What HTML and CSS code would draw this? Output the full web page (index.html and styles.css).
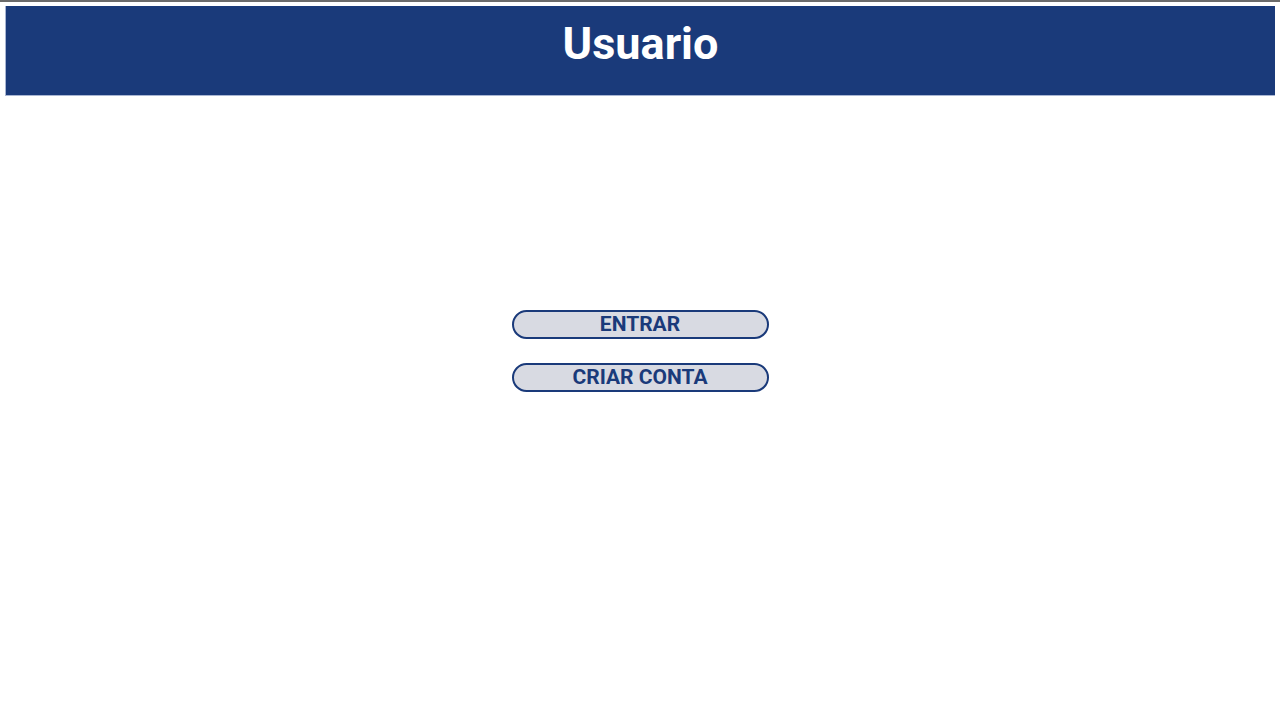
FILE: index.html
```html
<!DOCTYPE html>
<html lang="pt">
<head>
<meta charset="utf-8">
<title>Usuario</title>
<link rel="stylesheet" href="styles.css">
</head>
<body>
<div class="topline"></div>
<header class="header">
  <h1 class="title">Usuario</h1>
</header>
<main class="actions">
  <button class="btn">ENTRAR</button>
  <button class="btn">CRIAR CONTA</button>
</main>
</body>
</html>
```
FILE: styles.css
```css
html, body {
  margin: 0;
  padding: 0;
  background: #ffffff;
  font-family: Roboto, "Liberation Sans", sans-serif;
}
.topline {
  height: 2px;
  background: #6b6b6b;
}
.header {
  margin: 4px 5px 0 5px;
  height: 89px;
  background: #1a3a7a;
  border-left: 1px solid #a9b6d3;
  border-bottom: 1px solid #a9b6d3;
  display: flex;
  justify-content: center;
  align-items: flex-start;
}
.title {
  margin: 11px 0 0 0;
  color: #ffffff;
  font-size: 45px;
  font-weight: 700;
  line-height: 54px;
}
.actions {
  display: flex;
  flex-direction: column;
  align-items: center;
  gap: 24px;
  margin-top: 214px;
}
.btn {
  width: 257px;
  height: 29px;
  box-sizing: border-box;
  border: 2px solid #1a3a7a;
  border-radius: 15px;
  background: #d8dae2;
  color: #1a3a7a;
  font-family: Roboto, "Liberation Sans", sans-serif;
  font-size: 21px;
  font-weight: 700;
  padding: 0;
  line-height: 25px;
}
```
